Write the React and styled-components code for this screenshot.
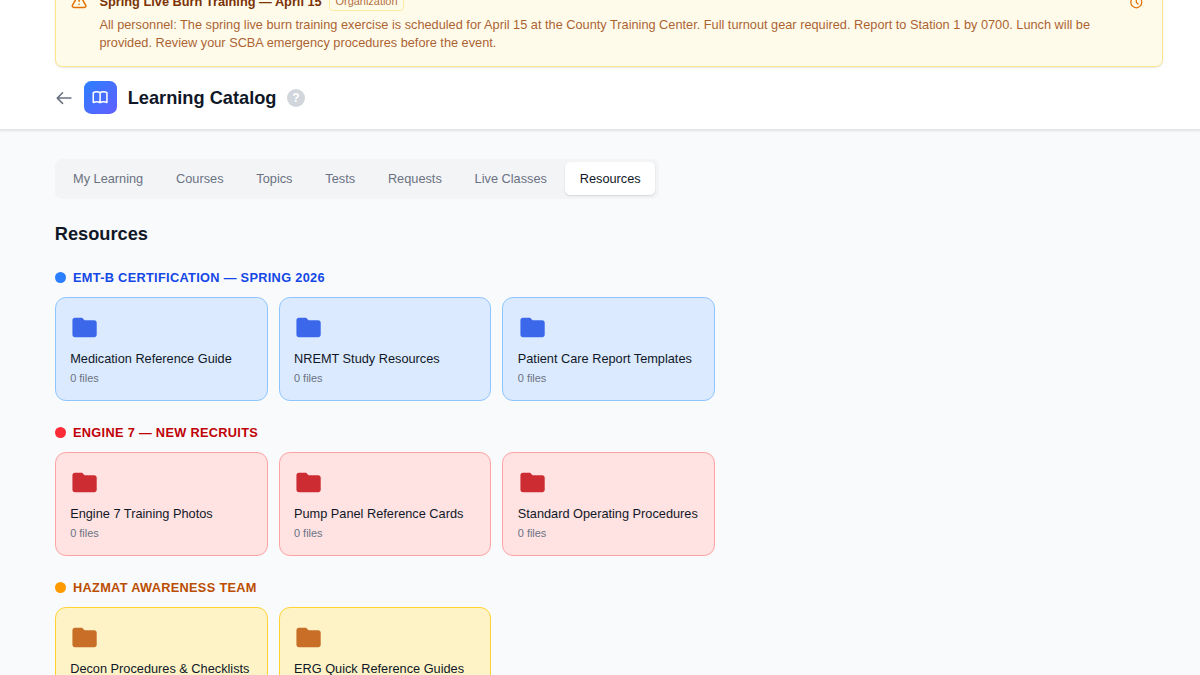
import styled, { createGlobalStyle } from 'styled-components';

const GlobalStyle = createGlobalStyle`
  * {
    box-sizing: border-box;
    margin: 0;
    padding: 0;
  }

  body {
    background: #f9fafb;
    font-family: "Liberation Sans", Arial, sans-serif;
    color: #101828;
    overflow: hidden;
  }
`;

const blue = { dot: '#2b7fff', text: '#1447e6', bg: '#dbeafe', border: '#8ec5ff' };
const red = { dot: '#fb2c36', text: '#c10007', bg: '#ffe2e2', border: '#ffa2a2' };
const amber = { dot: '#fe9a00', text: '#bb4d00', bg: '#fef3c6', border: '#ffd230' };

const tabs = ['My Learning', 'Courses', 'Topics', 'Tests', 'Requests', 'Live Classes', 'Resources'];

const groups = [
  {
    title: 'EMT-B Certification — Spring 2026',
    color: blue,
    folders: ['Medication Reference Guide', 'NREMT Study Resources', 'Patient Care Report Templates'],
  },
  {
    title: 'Engine 7 — New Recruits',
    color: red,
    folders: ['Engine 7 Training Photos', 'Pump Panel Reference Cards', 'Standard Operating Procedures'],
  },
  {
    title: 'Hazmat Awareness Team',
    color: amber,
    folders: ['Decon Procedures & Checklists', 'ERG Quick Reference Guides'],
  },
];

function App() {
  return (
    <Page>
      <GlobalStyle />
      <BannerArea>
        <Banner>
          <WarningIcon viewBox="0 0 24 24">
            <path d="M12 9v2m0 4h.01m-6.938 4h13.856c1.54 0 2.502-1.667 1.732-3L13.732 4c-.77-1.333-2.694-1.333-3.464 0L3.34 16c-.77 1.333.192 3 1.732 3z" />
          </WarningIcon>
          <BannerBody>
            <BannerHead>
              <BannerTitle>Spring Live Burn Training — April 15</BannerTitle>
              <Badge>Organization</Badge>
            </BannerHead>
            <BannerText>
              All personnel: The spring live burn training exercise is scheduled for April 15 at the
              County Training Center. Full turnout gear required. Report to Station 1 by 0700. Lunch
              will be provided. Review your SCBA emergency procedures before the event.
            </BannerText>
          </BannerBody>
          <SnoozeButton>
            <ClockIcon viewBox="0 0 24 24">
              <path d="M12 8v4l3 3m6-3a9 9 0 11-18 0 9 9 0 0118 0z" />
            </ClockIcon>
          </SnoozeButton>
        </Banner>
      </BannerArea>

      <Header>
        <BackIcon viewBox="0 0 24 24">
          <path d="M10 19l-7-7m0 0l7-7m-7 7h18" />
        </BackIcon>
        <Logo>
          <BookIcon viewBox="0 0 24 24">
            <path d="M12 6.253v13m0-13C10.832 5.477 9.246 5 7.5 5S4.168 5.477 3 6.253v13C4.168 18.477 5.754 18 7.5 18s3.332.477 4.5 1.253m0-13C13.168 5.477 14.754 5 16.5 5c1.747 0 3.332.477 4.5 1.253v13C19.832 18.477 18.247 18 16.5 18c-1.746 0-3.332.477-4.5 1.253" />
          </BookIcon>
        </Logo>
        <PageTitle>Learning Catalog</PageTitle>
        <Help>?</Help>
      </Header>

      <Main>
        <TabList>
          {tabs.map((tab) => (
            <Tab key={tab} $active={tab === 'Resources'}>
              {tab}
            </Tab>
          ))}
        </TabList>
        <SectionTitle>Resources</SectionTitle>
        {groups.map((group) => (
          <Group key={group.title}>
            <GroupHead>
              <Dot $color={group.color.dot} />
              <GroupTitle $color={group.color.text}>{group.title}</GroupTitle>
            </GroupHead>
            <Grid>
              {group.folders.map((name) => (
                <Card key={name} $color={group.color}>
                  <FolderIcon viewBox="0 0 24 24" $color={group.color.text}>
                    <path d="M10 4H4c-1.100 0-2 .9-2 2v12c0 1.100.9 2 2 2h16c1.100 0 2-.9 2-2V8c0-1.100-.9-2-2-2h-8l-2-2z" />
                  </FolderIcon>
                  <CardName>{name}</CardName>
                  <CardMeta>0 files</CardMeta>
                </Card>
              ))}
            </Grid>
          </Group>
        ))}
      </Main>
    </Page>
  );
}

export default App;

const Page = styled.div`
  height: 675px;
  overflow: hidden;
`;

const BannerArea = styled.div`
  height: 66.6px;
  padding: 0 37.2px 0 54.8px;
  display: flex;
  align-items: flex-end;
  background: #fff;
`;

const Banner = styled.div`
  position: relative;
  z-index: 1;
  display: flex;
  width: 100%;
  flex-shrink: 0;
  margin-bottom: -0.8px;
  padding: 14.6px 14.6px 14.1px;
  border: 1px solid #fee685;
  border-radius: 7.3px;
  background: #fffbeb;
  box-shadow: 0 1px 2px rgba(0, 0, 0, 0.1);
`;

const StrokeIcon = styled.svg`
  display: block;
  flex-shrink: 0;
  fill: none;
  stroke: currentColor;
  stroke-width: 2;
  stroke-linecap: round;
  stroke-linejoin: round;
`;

const WarningIcon = styled(StrokeIcon)`
  width: 18.2px;
  height: 18.2px;
  color: #e17100;
`;

const BannerBody = styled.div`
  flex: 1;
  margin-left: 10.9px;
`;

const BannerHead = styled.div`
  display: flex;
  align-items: center;
  gap: 7.3px;
  height: 18.2px;
  margin-bottom: 4.9px;
`;

const BannerTitle = styled.h4`
  font-size: 12.77px;
  line-height: 18.2px;
  font-weight: 700;
  color: #7b3306;
`;

const Badge = styled.span`
  padding: 0 5.5px 1px;
  border: 1px solid #fee685;
  border-radius: 3.6px;
  font-size: 10.94px;
  line-height: 14.6px;
  color: #973c00;
  opacity: 0.75;
`;

const BannerText = styled.p`
  font-size: 12.76px;
  line-height: 18.2px;
  color: #973c00;
  opacity: 0.8;
`;

const SnoozeButton = styled.button`
  align-self: flex-start;
  margin-left: 10.9px;
  padding: 2px 3.6px;
  border: none;
  background: none;
  color: #e17100;
`;

const ClockIcon = styled(StrokeIcon)`
  width: 14.6px;
  height: 14.6px;
`;

const Header = styled.header`
  display: flex;
  align-items: center;
  height: 63px;
  padding: 0 54.8px;
  border-bottom: 1px solid #e5e7eb;
  background: #fff;
  box-shadow: 0 1px 2px rgba(0, 0, 0, 0.1);
`;

const BackIcon = styled(StrokeIcon)`
  width: 18.2px;
  height: 18.2px;
  color: #6a7282;
`;

const Logo = styled.div`
  display: flex;
  align-items: center;
  justify-content: center;
  width: 32.8px;
  height: 32.8px;
  margin-left: 10.9px;
  border-radius: 7.3px;
  background: linear-gradient(135deg, #2b7fff, #615fff);
`;

const BookIcon = styled(StrokeIcon)`
  width: 18.2px;
  height: 18.2px;
  color: #fff;
`;

const PageTitle = styled.h1`
  margin-left: 11px;
  font-size: 18.23px;
  line-height: 25.5px;
  font-weight: 700;
`;

const Help = styled.span`
  display: flex;
  align-items: center;
  justify-content: center;
  width: 18.2px;
  height: 18.2px;
  margin-left: 10.3px;
  border-radius: 50%;
  background: #d1d5dc;
  color: #fff;
  font-size: 12px;
  font-weight: 700;
`;

const Main = styled.main`
  padding: 29.2px 37.2px 0 54.8px;
`;

const TabList = styled.div`
  display: inline-flex;
  gap: 3.65px;
  padding: 3.65px;
  border-radius: 7.3px;
  background: #f3f4f6;
  vertical-align: top;
`;

const Tab = styled.button`
  height: 32.8px;
  padding: 0 14.6px;
  border: none;
  border-radius: 5.5px;
  background: ${(props) => (props.$active ? '#fff' : 'transparent')};
  box-shadow: ${(props) => (props.$active ? '0 1px 2px rgba(0, 0, 0, 0.13)' : 'none')};
  color: ${(props) => (props.$active ? '#101828' : '#6a7282')};
  font-family: inherit;
  font-size: 12.76px;
`;

const SectionTitle = styled.h2`
  margin-top: 21.9px;
  font-size: 18.23px;
  line-height: 25.5px;
  font-weight: 700;
`;

const Group = styled.section`
  margin-top: 21.9px;
`;

const GroupHead = styled.div`
  display: flex;
  align-items: center;
  gap: 7.3px;
  height: 18.2px;
  margin-bottom: 10.9px;
`;

const Dot = styled.span`
  width: 10.9px;
  height: 10.9px;
  border-radius: 50%;
  background: ${(props) => props.$color};
`;

const GroupTitle = styled.h3`
  padding-top: 1.2px;
  color: ${(props) => props.$color};
  font-size: 12.76px;
  line-height: 18.2px;
  font-weight: 700;
  letter-spacing: 0.32px;
  text-transform: uppercase;
`;

const Grid = styled.div`
  display: grid;
  grid-template-columns: repeat(5, 1fr);
  gap: 10.94px;
`;

const Card = styled.div`
  height: 104px;
  padding: 14.6px 14.4px;
  border: 1px solid ${(props) => props.$color.border};
  border-radius: 10.9px;
  background: ${(props) => props.$color.bg};
`;

const FolderIcon = styled.svg`
  display: block;
  width: 29.15px;
  height: 29.15px;
  fill: ${(props) => props.$color};
  opacity: 0.8;
`;

const CardName = styled.p`
  margin-top: 8px;
  font-size: 12.76px;
  line-height: 18.2px;
  white-space: nowrap;
`;

const CardMeta = styled.p`
  margin-top: 2.9px;
  font-size: 10.94px;
  line-height: 14.6px;
  color: #6a7282;
`;
